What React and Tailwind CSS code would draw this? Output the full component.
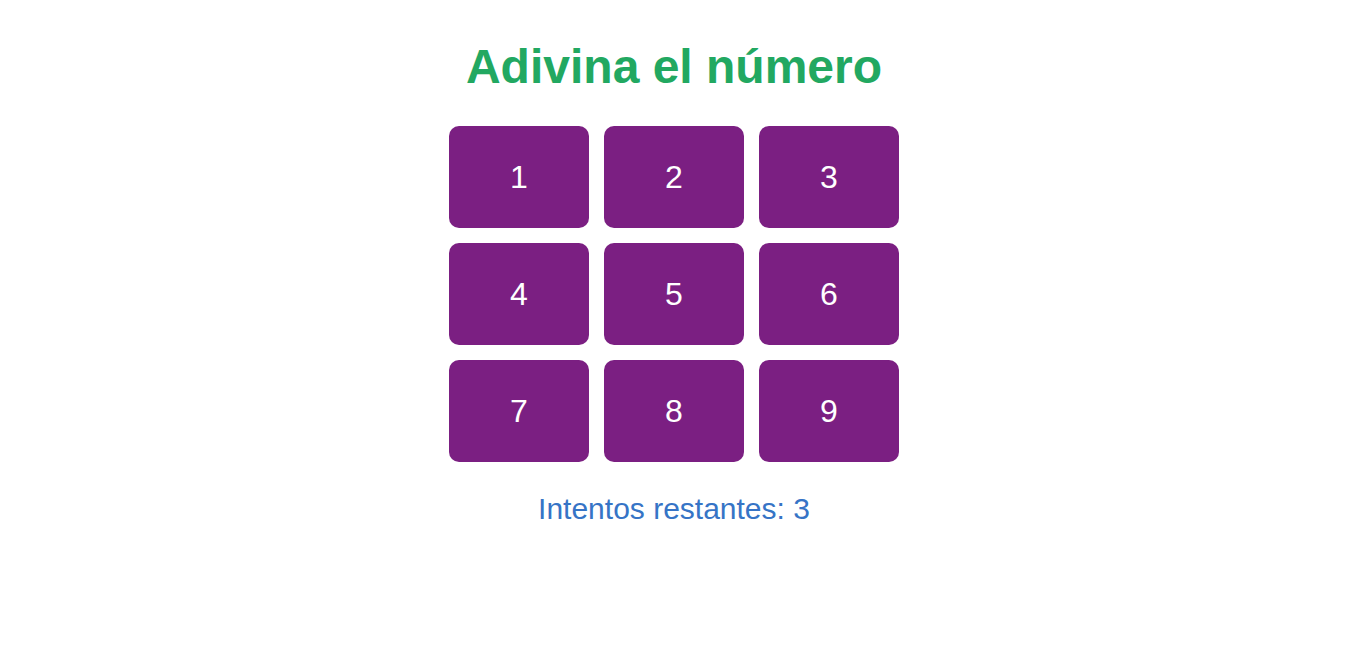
import { useState } from 'react';

const App = () => {
    const [intentos, setIntentos] = useState(3);
    const numeros = [1, 2, 3, 4, 5, 6, 7, 8, 9];

    const adivinar = () => {
        if (intentos > 0) setIntentos(intentos - 1);
    };

    return (
        <div className="min-h-screen bg-white flex flex-col items-center pl-[3px] font-['Liberation_Sans',Arial,sans-serif]">
            <h1 className="mt-[39px] text-[48px] leading-[55px] font-bold text-[#22a861]">Adivina el número</h1>
            <div className="mt-[32px] grid grid-cols-[140px_140px_140px] gap-[15px]">
                {numeros.map((n) => (
                    <button
                        key={n}
                        onClick={adivinar}
                        className="h-[102px] rounded-[10px] bg-[#7b1f82] text-white text-[32px] flex items-center justify-center"
                    >
                        {n}
                    </button>
                ))}
            </div>
            <p className="mt-[30px] text-[30px] leading-[34px] text-[#3674c6]">Intentos restantes: {intentos}</p>
        </div>
    );
};

export default App;
